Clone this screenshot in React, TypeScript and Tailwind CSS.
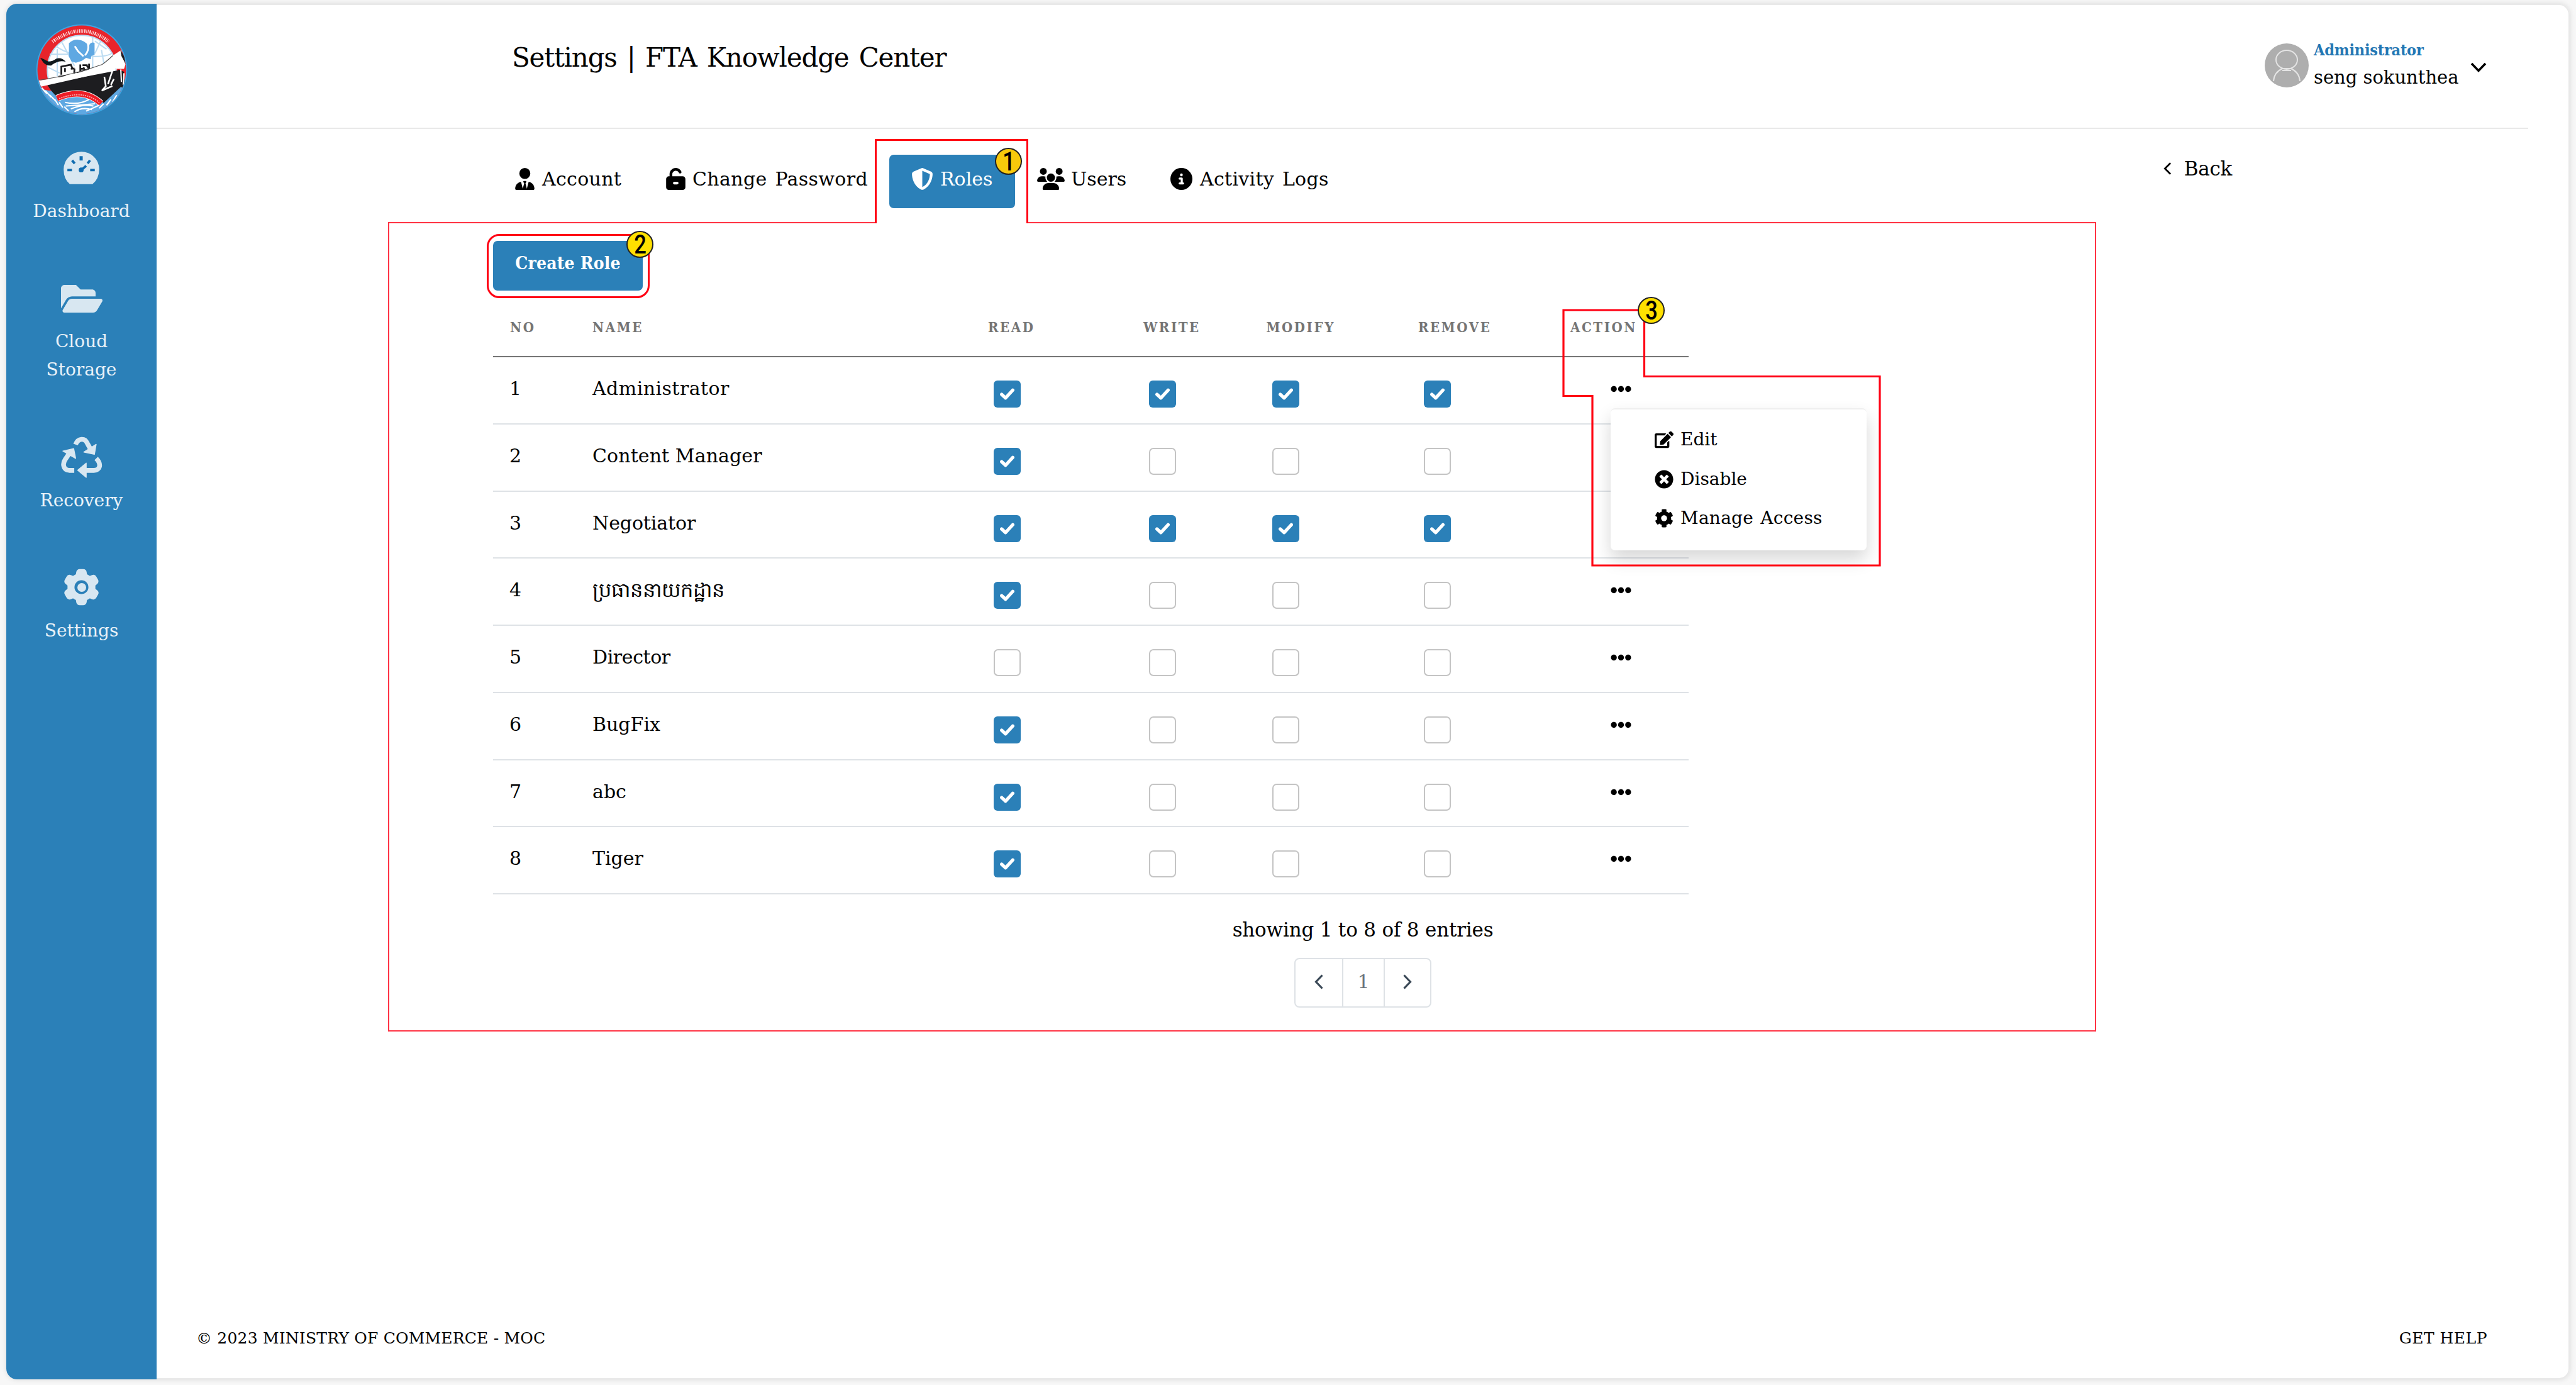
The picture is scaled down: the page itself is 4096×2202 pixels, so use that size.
import React from "react";
import {
  FaUserTie,
  FaUnlockKeyhole,
  FaShieldHalved,
  FaUsers,
  FaCircleInfo,
} from "react-icons/fa6";
import { FaFolderOpen, FaCog, FaEdit, FaTimesCircle, FaEllipsisH } from "react-icons/fa";
import { HiCog6Tooth } from "react-icons/hi2";

const roles: { name: string; perms: boolean[]; style: string }[] = [
  { name: "Administrator", perms: [true, true, true, true], style: "tracking-[0.45px]" },
  { name: "Content Manager", perms: [true, false, false, false], style: "tracking-[0.1px]" },
  { name: "Negotiator", perms: [true, true, true, true], style: "tracking-[-0.1px]" },
  { name: "ប្រធាននាយកដ្ឋាន", perms: [true, false, false, false], style: "text-[32px]" },
  { name: "Director", perms: [false, false, false, false], style: "tracking-[-0.4px]" },
  { name: "BugFix", perms: [true, false, false, false], style: "tracking-[0px]" },
  { name: "abc", perms: [true, false, false, false], style: "tracking-[0px]" },
  { name: "Tiger", perms: [true, false, false, false], style: "tracking-[0px]" },
];

const GRID =
  "grid grid-cols-[131px_629px_247px_195.5px_241.500px_242px_1fr] pl-[27px] w-[1901px]";

function Logo() {
  return (
    <svg viewBox="35 42 630 630" className="size-[146px]">
      <defs>
        <clipPath id="disc">
          <circle cx="350" cy="357" r="304" />
        </clipPath>
      </defs>
      <circle cx="350" cy="357" r="312" fill="#3fa4e0" />
      <g clipPath="url(#disc)">
        <rect x="30" y="30" width="640" height="660" fill="#e8242b" />
        <circle cx="350" cy="357" r="238" fill="#fff" />
        <g fill="none" stroke="#bcdcf2" strokeWidth="9">
          <circle cx="350" cy="357" r="236" />
          <path d="M180 200Q270 260 400 265T560 240M182 215V400M215 170L300 330M425 130V360M485 220L505 330M120 340L200 380M130 250H270M440 245L480 160M440 160L520 215" />
        </g>
        <path
          d="M262 175Q285 150 320 150Q375 155 398 195Q410 160 438 172V255L415 262L412 285L380 275L350 295L310 308L280 300L262 265Z"
          fill="#5fa8e2"
        />
        <path
          d="M302 195L325 230L362 264M385 160Q405 200 385 240L372 258"
          fill="none"
          stroke="#fff"
          strokeWidth="12"
        />
        <path d="M190 410L210 330L265 315L300 345L330 312L400 300L410 350Z" fill="#fff" />
        <g stroke="#1d1d20" strokeWidth="12" fill="none">
          <path d="M210 390V335L275 322L285 345M235 345V372M190 405L240 398M300 348L298 382M275 350L300 348M340 320V380M355 325H390M362 340L372 368M385 328L402 355M400 315V350M315 378L400 352M345 350H370" />
        </g>
        <path d="M30 470Q200 560 670 420V690H30Z" fill="#5fa8e2" />
        <path
          d="M110 455L600 360L655 440L500 585Q420 495 340 512Q250 520 185 545Q150 520 110 455Z"
          fill="#1d1d20"
        />
        <path
          d="M55 430Q300 400 490 320Q540 280 570 255L620 222L650 320L640 350L590 350L570 340L545 362Q330 415 70 472Z"
          fill="#fff"
        />
        <path d="M60 428Q300 390 490 320Q520 300 562 260" fill="none" stroke="#555" strokeWidth="5" />
        <path d="M615 222L645 270L648 312L622 262ZM600 355L640 370L635 480L600 470Z" fill="#1d1d20" />
        <path d="M618 355L622 440M640 380L635 460" stroke="#fff" strokeWidth="9" />
        <path
          d="M560 365L530 455M505 405L515 470L488 500L560 468M570 420L550 460"
          fill="none"
          stroke="#fff"
          strokeWidth="11"
        />
        <path
          d="M65 275Q85 280 120 300Q150 300 175 280Q215 270 240 302Q215 295 195 300Q160 310 140 328Q105 330 85 305Z"
          fill="#10181c"
        />
        <path d="M180 552Q360 475 482 588" fill="none" stroke="#fff" strokeWidth="46" />
        <path d="M180 552Q360 475 482 588" fill="none" stroke="#ee1c25" strokeWidth="38" />
        <path
          d="M195 555Q360 490 470 582"
          fill="none"
          stroke="#f7a9ac"
          strokeWidth="8"
          strokeDasharray="9 6"
        />
        <g fill="none" stroke="#fff" strokeWidth="9">
          <path d="M235 580Q330 600 400 560M240 605Q340 600 440 590M275 625Q360 590 430 605M300 645Q350 610 420 630M75 480L110 520M100 500L140 545M130 530L170 570M165 560L190 600M195 580L220 615M230 610L260 640M380 640L470 600M470 620L500 590M520 600L550 560M560 580L590 530" />
        </g>
      </g>
      <path
        d="M150 165Q350 15 535 165"
        fill="none"
        stroke="#fbd5d6"
        strokeWidth="24"
        strokeDasharray="5 7 9 6 4 6"
      />
    </svg>
  );
}

function Gauge() {
  return (
    <svg viewBox="44 49 250 228" className="h-[52px] w-[57px]">
      <path d="M88 276Q44 240 45 172A124 122 0 0 1 293 172Q292 240 246 276Z" fill="#d8e7f1" />
      <g stroke="#0f6cb0" strokeWidth="17" fill="none">
        <path d="M71 178H103M230 178H262M104 110L122 132M229 110L212 132" />
        <path d="M167 81V111" strokeWidth="22" />
        <path d="M168 178L202 148" />
      </g>
      <circle cx="167" cy="177" r="17" fill="#0f6cb0" />
    </svg>
  );
}

function Recycle() {
  return (
    <svg viewBox="24 46 288 288" className="size-[66px]" fill="#d8e7f1" stroke="#d8e7f1">
      <g fill="none" strokeWidth="33">
        <path d="M125 102C142 55 190 55 206 92L226 128" />
        <path d="M268 198C305 235 298 281 252 281H190" />
        <path d="M116 281H80C40 278 32 235 54 204L84 160" />
      </g>
      <g strokeWidth="6" strokeLinejoin="round">
        <path d="M268 100L256 170L182 154Z" />
        <path d="M199 230V330L140 280Z" />
        <path d="M37 147L112 130L126 198Z" />
      </g>
    </svg>
  );
}

function Check({ on }: { on: boolean }) {
  return on ? (
    <span className="ml-[9px] mt-[37px] flex size-[43px] items-center justify-center rounded-[6px] bg-[#2b80b8]">
      <svg viewBox="0 0 24 24" className="size-[25px]" fill="none" stroke="#fff" strokeWidth="5">
        <path d="M3.500 12.500L9.500 18L20.500 6" strokeLinecap="round" strokeLinejoin="round" />
      </svg>
    </span>
  ) : (
    <span className="ml-[9px] mt-[37px] block size-[43px] rounded-[7px] border-2 border-[#c4c4c4] bg-white" />
  );
}

function Badge({ n, className }: { n: string; className: string }) {
  return (
    <span
      className={
        "absolute flex size-[43px] items-center justify-center rounded-full border-2 border-[#222] font-['Roboto',sans-serif] text-[42px] font-medium leading-none text-black " +
        className
      }
    >
      <span className="block scale-x-[0.82]">{n}</span>
    </span>
  );
}

export default function App() {
  return (
    <div className="relative h-[2202px] w-[4096px] overflow-hidden bg-[#f7f7f7] pl-[10px] pt-[6px] font-['DejaVu_Serif',serif] text-[30px] text-black">
      <div className="flex h-[2187px] w-[4076px] rounded-[17px] shadow-[0_0_8px_rgba(0,0,0,0.12)]">
        <aside className="flex w-[239px] shrink-0 flex-col items-center rounded-l-[17px] bg-[#2b80b8] pt-[32px] text-center text-[28px] leading-[45px] text-[#eaf2f8]">
          <Logo />
          <div className="mt-[57px]">
            <Gauge />
          </div>
          <div className="mt-[20px]">Dashboard</div>
          <FaFolderOpen className="mt-[84px] size-[66px] text-[#d8e7f1]" />
          <div className="mt-[12px]">
            Cloud
            <br />
            Storage
          </div>
          <div className="mt-[84px]">
            <Recycle />
          </div>
          <div className="mt-[13px]">Recovery</div>
          <div className="relative mt-[80px] flex size-[71px] items-center justify-center text-[#d8e7f1]">
            <HiCog6Tooth className="size-[71px]" />
            <span className="absolute size-[14px] rounded-full bg-[#d8e7f1]" />
          </div>
          <div className="mt-[11px]">Settings</div>
        </aside>

        <main className="flex min-w-0 flex-1 flex-col rounded-r-[17px] border-y-2 border-r-2 border-[#e9e9e9] bg-white">
          <header className="mr-[64px] flex h-[197px] shrink-0 border-b-2 border-[#e9e9e9] pl-[565px] pr-[66px]">
            <h1 className="mt-[59px] whitespace-nowrap text-[42px] leading-[50px] tracking-[-1.200px] [word-spacing:4px]">
              Settings | FTA Knowledge Center
            </h1>
            <div className="ml-auto flex">
              <svg viewBox="0 0 70 70" className="mt-[61px] size-[70px]">
                <circle cx="35" cy="35" r="35" fill="#aeaeae" />
                <g fill="none" stroke="#e4e4e4" strokeWidth="2">
                  <ellipse cx="35" cy="26" rx="17" ry="15" />
                  <path d="M28 40Q15 46 14 60M42 40Q55 46 56 60M27 40H43M28 43H42" />
                </g>
              </svg>
              <div className="ml-[8px] mt-[52px] w-[232px] whitespace-nowrap">
                <div className="font-['DejaVu_Serif_Condensed','DejaVu_Serif',serif] text-[25px] font-bold leading-[40px] tracking-[-0.2px] text-[#2377b4]">
                  Administrator
                </div>
                <div className="text-[29px] leading-[46px]">seng sokunthea</div>
              </div>
              <svg viewBox="0 0 26 18" className="ml-[17px] mt-[90px] h-[18px] w-[26px]" fill="none" stroke="#000" strokeWidth="3.6">
                <path d="M2 3L13 14.5L24 3" />
              </svg>
            </div>
          </header>

          <nav className="flex h-[148px] shrink-0 whitespace-nowrap pl-[535px] [&>a]:mt-[41px] [&>a]:flex [&>a]:h-[85px] [&>a]:shrink-0 [&>a]:items-center [&>a]:pb-[8px] [&>a]:pl-[35px]">
            <a className="w-[240px]">
              <FaUserTie className="w-[31px] text-[35px]" />
              <span className="ml-[12px] tracking-[0.3px]">Account</span>
            </a>
            <a className="w-[390px]">
              <FaUnlockKeyhole className="w-[31px] text-[35px]" />
              <span className="ml-[11px] tracking-[0.35px] [word-spacing:3px]">Change Password</span>
            </a>
            <a className="w-[200px] rounded-[7px] bg-[#2b80b8] text-white">
              <FaShieldHalved className="text-[35px]" />
              <span className="ml-[11px]">Roles</span>
            </a>
            <a className="w-[212px]">
              <FaUsers className="w-[44px] text-[35px]" />
              <span className="ml-[10px]">Users</span>
            </a>
            <a className="w-[322px]">
              <FaCircleInfo className="text-[35px]" />
              <span className="ml-[12px] tracking-[0.3px] [word-spacing:3px]">Activity Logs</span>
            </a>
            <div className="ml-auto mr-[535px] mt-[43px] flex h-[40px] items-center">
              <svg viewBox="0 0 14 22" className="h-[22px] w-[13px]" fill="none" stroke="#000" strokeWidth="3">
                <path d="M12 1.500L2.500 11L12 20.500" />
              </svg>
              <span className="ml-[20px] text-[31px] tracking-[-0.3px]">Back</span>
            </div>
          </nav>

          <section className="ml-[368px] h-[1287px] w-[2716px] shrink-0 border-2 border-[#ff3344]">
            <button className="ml-[165px] mt-[28px] block h-[79px] w-[238px] rounded-[7px] bg-[#2b80b8] pb-[7px] font-['DejaVu_Serif_Condensed','DejaVu_Serif',serif] text-[28px] font-bold tracking-[0.2px] text-white">
              Create Role
            </button>
            <div className="ml-[165px]">
              <div
                className={
                  GRID +
                  " h-[106px] border-b-2 border-[#757575] pt-[43px] font-['DejaVu_Serif_Condensed','DejaVu_Serif',serif] text-[22px] font-bold leading-[30px] tracking-[2.600px] text-[#757575]"
                }
              >
                <span>NO</span>
                <span>NAME</span>
                <span>READ</span>
                <span>WRITE</span>
                <span>MODIFY</span>
                <span>REMOVE</span>
                <span>ACTION</span>
              </div>
              {roles.map((r, i) => (
                <div key={r.name} className={GRID + " h-[106.75px] border-b-2 border-[#dee2e6]"}>
                  <span className="-ml-px mt-[30px] leading-[40px]">{i + 1}</span>
                  <span className={"mt-[30px] leading-[40px] " + r.style}>{r.name}</span>
                  {r.perms.map((on, k) => (
                    <Check key={k} on={on} />
                  ))}
                  <FaEllipsisH className="ml-[64px] mt-[34px] size-[33px]" />
                </div>
              ))}
            </div>
            <div className="ml-[1180px] mt-[36px] flex w-[736px] flex-col items-center">
              <div className="text-[31px] leading-[40px] tracking-[-0.2px]">showing 1 to 8 of 8 entries</div>
              <div className="mt-[25px] flex h-[79px] w-[218px] rounded-[8px] border-2 border-[#dee2e6] text-[#6c757d]">
                <span className="flex w-[74px] items-center justify-center pb-[4px]">
                  <svg viewBox="0 0 14 24" className="h-[24px] w-[14px]" fill="none" stroke="#3a4856" strokeWidth="3.2">
                    <path d="M12.500 1.500L2.500 12L12.500 22.500" />
                  </svg>
                </span>
                <span className="flex w-[68px] items-center justify-center border-x-2 border-[#dee2e6] pb-[4px]">1</span>
                <span className="flex w-[72px] items-center justify-center pb-[4px]">
                  <svg viewBox="0 0 14 24" className="h-[24px] w-[14px]" fill="none" stroke="#3a4856" strokeWidth="3.2">
                    <path d="M1.500 1.500L11.500 12L1.500 22.500" />
                  </svg>
                </span>
              </div>
            </div>
          </section>

          <footer className="mb-[43px] ml-[63px] mr-[129px] mt-auto flex justify-between text-[25px] leading-[40px] tracking-[0.2px]">
            <span>© 2023 MINISTRY OF COMMERCE - MOC</span>
            <span className="tracking-[0.5px]">GET HELP</span>
          </footer>
        </main>
      </div>

      {/* Row action menu */}
      <div className="absolute left-[2561px] top-[649px] flex h-[226px] w-[407px] flex-col rounded-[7px] border-t-2 border-[#efefef] bg-white pl-[70px] pt-[17px] text-[28px] shadow-[0_14px_28px_rgba(0,0,0,0.16)] [&>div]:flex [&>div]:h-[62.500px] [&>div]:items-center [&>div]:gap-[11px]">
        <div>
          <FaEdit className="size-[30px]" />
          Edit
        </div>
        <div>
          <FaTimesCircle className="size-[30px]" />
          Disable
        </div>
        <div>
          <FaCog className="size-[30px]" />
          <span className="tracking-[0.25px] [word-spacing:2px]">Manage Access</span>
        </div>
      </div>

      {/* Numbered callouts */}
      <div className="absolute left-[1391px] top-[221px] h-[134px] w-[244px] border-x-[3px] border-t-[3px] border-[#ff0013]" />
      <div className="absolute left-[1394px] top-[351px] h-[6px] w-[238px] bg-white" />
      <div className="absolute left-[774px] top-[372px] h-[102px] w-[259px] rounded-[20px] border-[3px] border-[#ff0013]" />
      <svg
        viewBox="0 0 510 412"
        className="absolute left-[2483px] top-[490px] h-[412px] w-[510px]"
        fill="none"
        stroke="#ff0013"
        strokeWidth="3.2"
      >
        <path d="M3 3H131.500V108.500H506V409H49V139.500H3Z" />
      </svg>
      <Badge n="1" className="left-[1582px] top-[235px] bg-[#f8c90b]" />
      <Badge n="2" className="left-[996px] top-[367px] bg-[#ffe000]" />
      <Badge n="3" className="left-[2604px] top-[472px] bg-[#ffe000]" />
    </div>
  );
}
